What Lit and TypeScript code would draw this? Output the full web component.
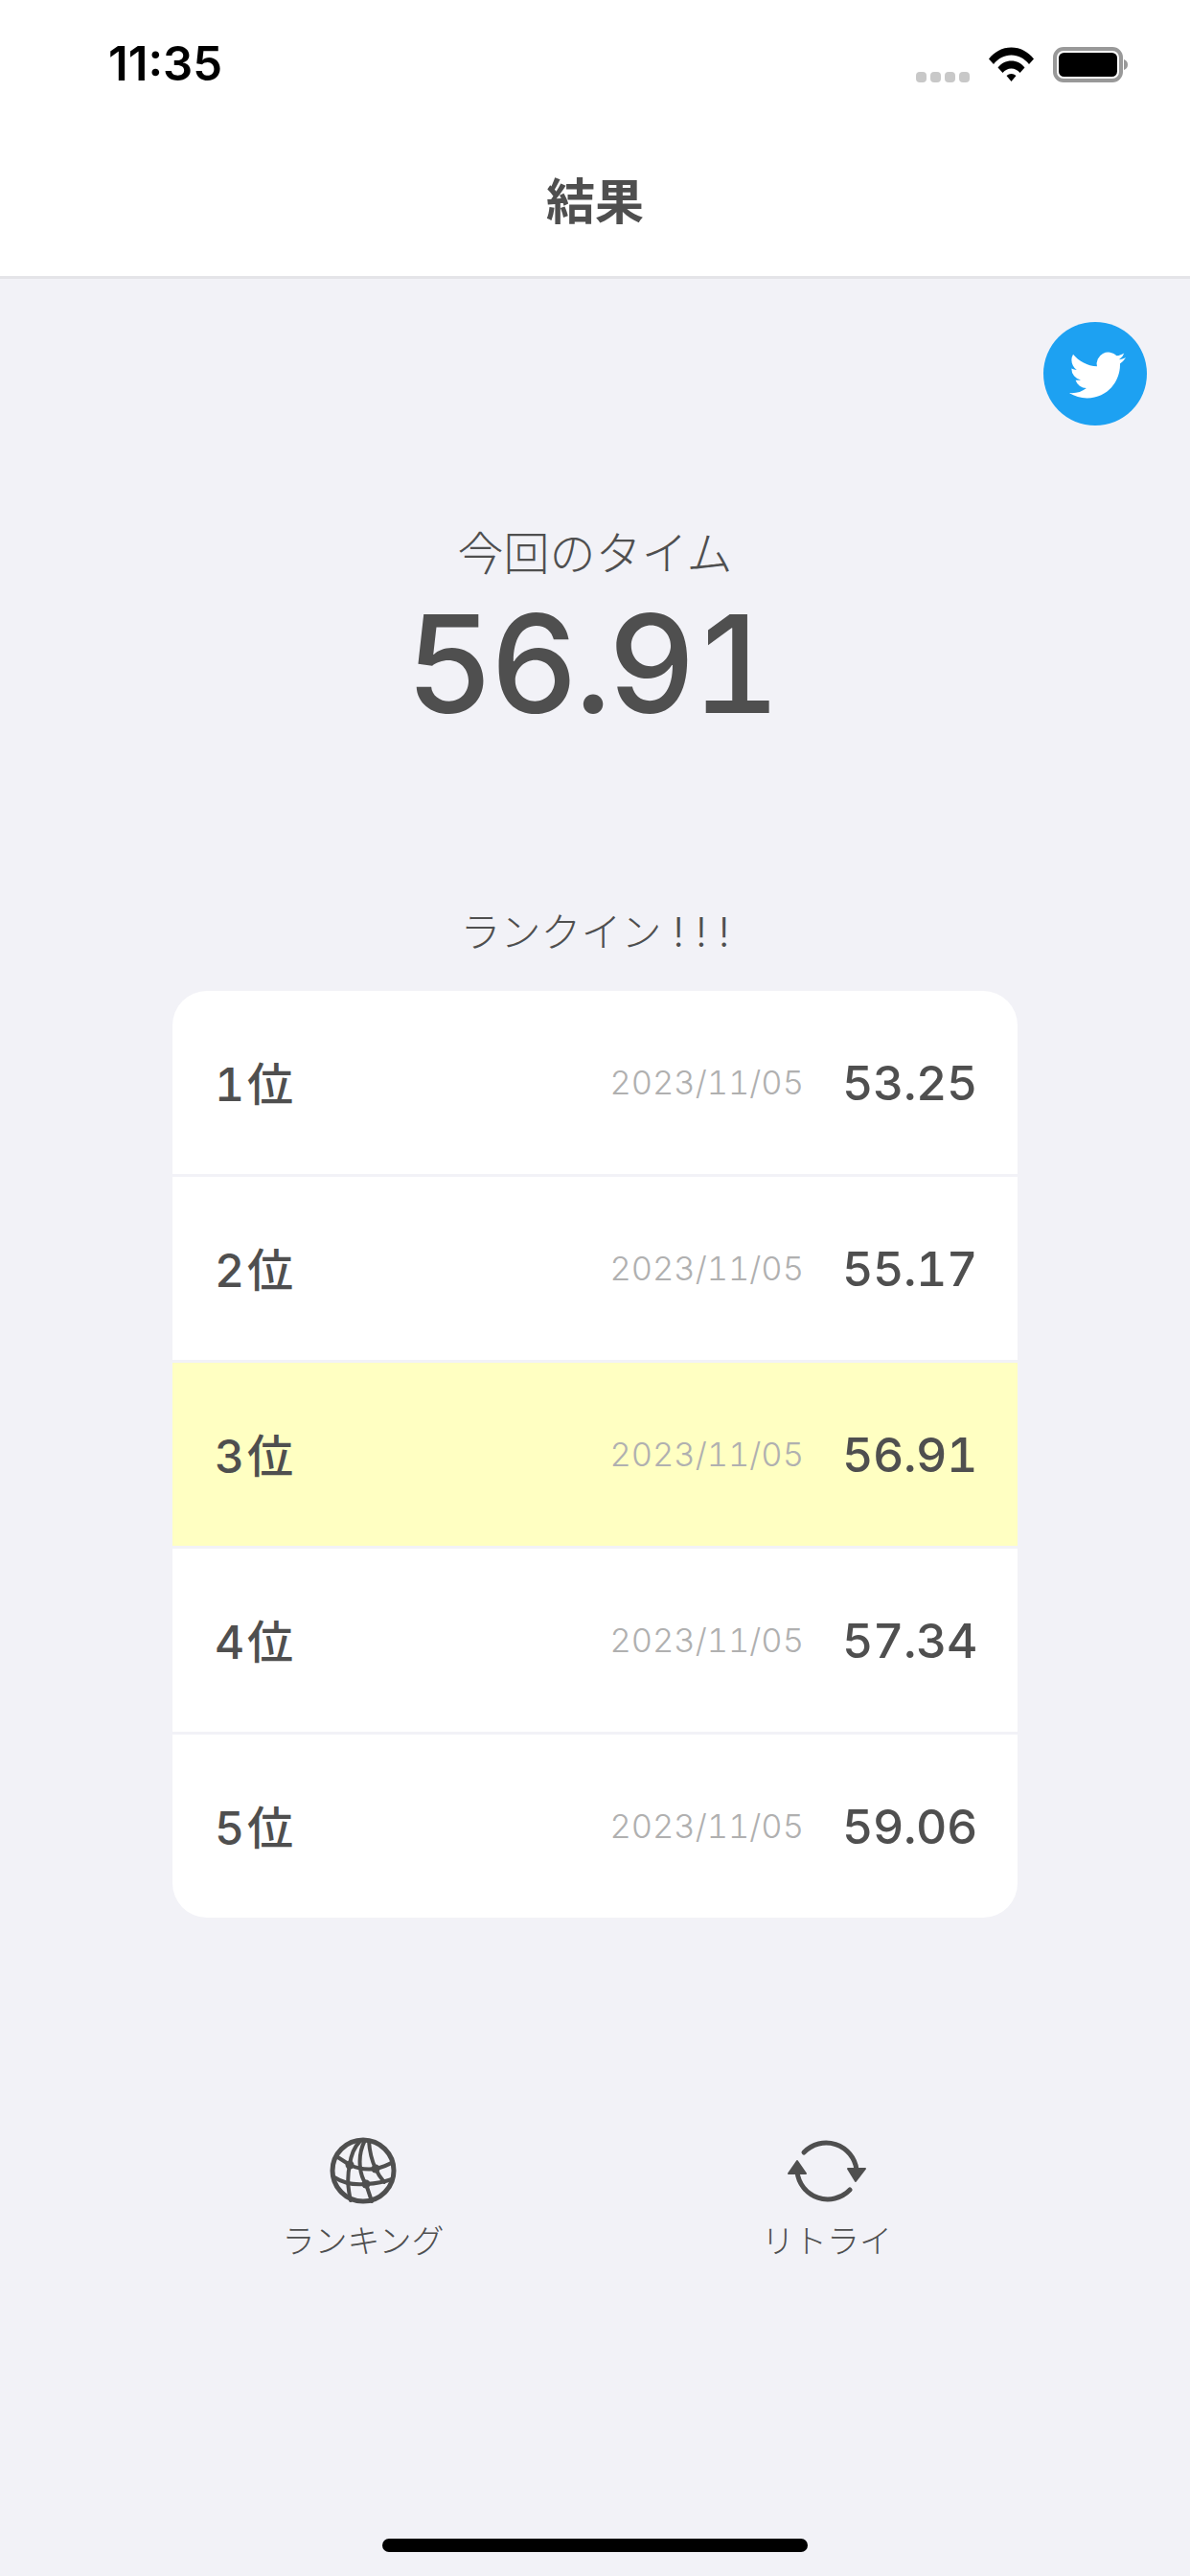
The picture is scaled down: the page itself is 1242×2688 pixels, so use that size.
import { LitElement, html, css, svg } from 'lit';
import { customElement, property } from 'lit/decorators.js';
import { classMap } from 'lit/directives/class-map.js';

interface RankEntry {
  rank: number;
  date: string;
  time: string;
  current?: boolean;
}

const RANKS: RankEntry[] = [
  { rank: 1, date: '2023/11/05', time: '53.25' },
  { rank: 2, date: '2023/11/05', time: '55.17' },
  { rank: 3, date: '2023/11/05', time: '56.91', current: true },
  { rank: 4, date: '2023/11/05', time: '57.34' },
  { rank: 5, date: '2023/11/05', time: '59.06' },
];

const twitterIcon = svg`
  <path fill="#fff" d="M23.953 4.57a10 10 0 01-2.825.775 4.958 4.958 0 002.163-2.723c-.951.555-2.005.959-3.127 1.184a4.92 4.92 0 00-8.384 4.482C7.69 8.095 4.067 6.13 1.64 3.162a4.822 4.822 0 00-.666 2.475c0 1.71.87 3.213 2.188 4.096a4.904 4.904 0 01-2.228-.616v.06a4.923 4.923 0 003.946 4.827 4.996 4.996 0 01-2.212.085 4.936 4.936 0 004.604 3.417 9.867 9.867 0 01-6.102 2.105c-.39 0-.779-.023-1.17-.067a13.995 13.995 0 007.557 2.209c9.053 0 13.998-7.496 13.998-13.985 0-.21 0-.42-.015-.63A9.935 9.935 0 0024 4.59z"/>
`;

const globeIcon = svg`
  <g transform="translate(1 0)" fill="none" stroke="#4f4f4f" stroke-linecap="round" stroke-linejoin="round">
    <circle cx="49" cy="51" r="32" stroke-width="5"/>
    <g stroke-width="4">
      <path d="M46 20Q37 29 35 45Q31 62 36 82"/>
      <path d="M51 19Q44 33 46 48Q47 58 52 65L58 83"/>
      <path d="M55 20Q56 36 62 49Q65 56 71 63"/>
      <path d="M21 36L35 45Q48 51 62 49Q72 47 80 42"/>
      <path d="M19 58Q33 67 52 65Q68 64 79 60"/>
    </g>
    <g fill="#4f4f4f" stroke="none">
      <circle cx="35" cy="45" r="4.500"/>
      <circle cx="62" cy="49" r="4.500"/>
      <circle cx="52" cy="65" r="4.500"/>
    </g>
  </g>
`;

const retryIcon = svg`
  <g transform="translate(-3 0)">
    <path fill="none" stroke="#4f4f4f" stroke-width="5" stroke-linecap="round" d="M29 32A32 32 0 0 1 84 50"/>
    <path fill="none" stroke="#4f4f4f" stroke-width="5" stroke-linecap="round" d="M22 52A32 32 0 0 0 77 71"/>
    <path fill="#4f4f4f" stroke="#4f4f4f" stroke-width="2" stroke-linejoin="round" d="M75 49H93L83 62Z"/>
    <path fill="#4f4f4f" stroke="#4f4f4f" stroke-width="2" stroke-linejoin="round" d="M13 54H31L22 41Z"/>
  </g>
`;

@customElement('app-root')
export class AppRoot extends LitElement {
  @property({ type: String })
  currentTime = '56.91';

  static styles = css`
    :host {
      display: block;
      font-family: 'Inter', 'Noto Sans CJK JP', sans-serif;
      color: #4f4f4f;
    }

    .screen {
      display: flex;
      flex-direction: column;
      min-height: 2688px;
      background: #f2f2f7;
    }

    .top {
      background: #fff;
      border-bottom: 3px solid #e4e4e8;
    }

    .status {
      display: flex;
      align-items: flex-start;
      justify-content: space-between;
      height: 132px;
      box-sizing: border-box;
      padding: 49px 64px 0 113px;
    }

    .clock {
      font-size: 49px;
      font-weight: 600;
      line-height: 36px;
      color: #000;
    }

    .status-icons {
      display: flex;
      align-items: flex-start;
      gap: 20px;
    }

    .signal {
      display: flex;
      gap: 4px;
      margin-top: 26px;
    }

    .signal span {
      width: 11px;
      height: 11px;
      border-radius: 4px;
      background: #c8c8c8;
    }

    .wifi {
      display: block;
      width: 47px;
      height: 36px;
    }

    .battery {
      display: block;
      width: 79px;
      height: 37px;
    }

    .nav-title {
      margin: 0;
      height: 156px;
      box-sizing: border-box;
      padding-bottom: 6px;
      display: flex;
      align-items: center;
      justify-content: center;
      font-family: 'Noto Sans CJK JP', sans-serif;
      font-size: 51px;
      font-weight: 700;
    }

    .share-row {
      display: flex;
      justify-content: flex-end;
      padding: 45px 45px 0 0;
    }

    .share {
      display: flex;
      align-items: center;
      justify-content: center;
      width: 108px;
      height: 108px;
      border-radius: 50%;
      background: #1da1f2;
    }

    .share svg {
      width: 59px;
      height: 59px;
      margin: 3px 0 0 5px;
    }

    .summary {
      display: flex;
      flex-direction: column;
      align-items: center;
      margin-top: 100px;
    }

    .summary-label {
      font-family: 'Noto Sans CJK JP', sans-serif;
      font-size: 48px;
      font-weight: 300;
      line-height: 60px;
    }

    .summary-value {
      margin: 3px 8px 0 0;
      font-size: 142px;
      font-weight: 460;
      line-height: 170px;
      letter-spacing: -3.800px;
      font-variant-numeric: tabular-nums;
    }

    .rank-in {
      margin: 166px 0 31px;
      text-align: center;
      font-size: 42px;
      font-weight: 300;
      line-height: 60px;
    }

    .card {
      margin: 0 180px;
      background: #fff;
      border-radius: 36px;
      overflow: hidden;
    }

    .row {
      display: flex;
      align-items: center;
      height: 191px;
      padding: 0 42px 0 44px;
      border-bottom: 3px solid #f2f2f7;
      font-variant-numeric: tabular-nums;
    }

    .row:last-child {
      border-bottom: none;
    }

    .row.current {
      background: #ffffc2;
    }

    .rank {
      flex: 1;
      margin-top: -4px;
      font-size: 48px;
      font-weight: 450;
    }

    .rank-number {
      margin-right: 3px;
    }

    .date {
      font-size: 34.500px;
      font-weight: 300;
      color: #b0b0b0;
    }

    .time {
      margin-left: 40px;
      font-size: 50px;
      font-weight: 450;
      letter-spacing: -0.400px;
    }

    .actions {
      display: grid;
      grid-template-columns: 1fr 1fr;
      padding: 0 137px;
      margin-top: 213px;
    }

    .action {
      display: flex;
      flex-direction: column;
      align-items: center;
    }

    .action svg {
      display: block;
      width: 100px;
      height: 100px;
    }

    .action-label {
      margin-top: 3px;
      font-size: 34px;
      font-weight: 300;
      line-height: 44px;
    }

    .home-bar {
      align-self: center;
      width: 444px;
      height: 14px;
      margin-top: auto;
      margin-bottom: 25px;
      border-radius: 7px;
      background: #000;
    }
  `;

  private _renderStatus() {
    return html`
      <div class="status">
        <span class="clock">11:35</span>
        <div class="status-icons">
          <div class="signal"><span></span><span></span><span></span><span></span></div>
          <svg class="wifi" viewBox="0 0 47 36">
            <path d="M0 12.5C6 5 14 .5 23.5 .5S41 5 47 12.5L42 18C37 12 31 8.500 23.500 8.500S10 12 5 18Z"/>
            <path d="M9.500 21.500C13 17 18 14.500 23.500 14.500S34 17 37.500 21.500L32.500 27C30 24 27 22.500 23.500 22.500S17 24 14.500 27Z"/>
            <path d="M18.500 30C20 28.800 21.800 28 23.500 28S27 28.800 28.500 30L23.500 36Z"/>
          </svg>
          <svg class="battery" viewBox="0 0 79 37">
            <rect x="2" y="2" width="69" height="33" rx="9" fill="none" stroke="#999" stroke-width="4"/>
            <rect x="6" y="6" width="61" height="25" rx="5.500" fill="#000"/>
            <path d="M74 13C77 14 78 16 78 18.500S77 23 74 24Z" fill="#999"/>
          </svg>
        </div>
      </div>
    `;
  }

  private _renderRow(entry: RankEntry) {
    return html`
      <div class=${classMap({ row: true, current: !!entry.current })}>
        <span class="rank"><span class="rank-number">${entry.rank}</span>位</span>
        <span class="date">${entry.date}</span>
        <span class="time">${entry.time}</span>
      </div>
    `;
  }

  render() {
    return html`
      <div class="screen">
        <div class="top">
          ${this._renderStatus()}
          <h1 class="nav-title">結果</h1>
        </div>

        <div class="share-row">
          <div class="share"><svg viewBox="0 0 24 24">${twitterIcon}</svg></div>
        </div>

        <div class="summary">
          <div class="summary-label">今回のタイム</div>
          <div class="summary-value">${this.currentTime}</div>
        </div>

        <div class="rank-in">ランクイン ! ! !</div>

        <div class="card">${RANKS.map((entry) => this._renderRow(entry))}</div>

        <div class="actions">
          <div class="action">
            <svg viewBox="0 0 100 100">${globeIcon}</svg>
            <span class="action-label">ランキング</span>
          </div>
          <div class="action">
            <svg viewBox="0 0 100 100">${retryIcon}</svg>
            <span class="action-label">リトライ</span>
          </div>
        </div>

        <div class="home-bar"></div>
      </div>
    `;
  }
}

declare global {
  interface HTMLElementTagNameMap {
    'app-root': AppRoot;
  }
}
